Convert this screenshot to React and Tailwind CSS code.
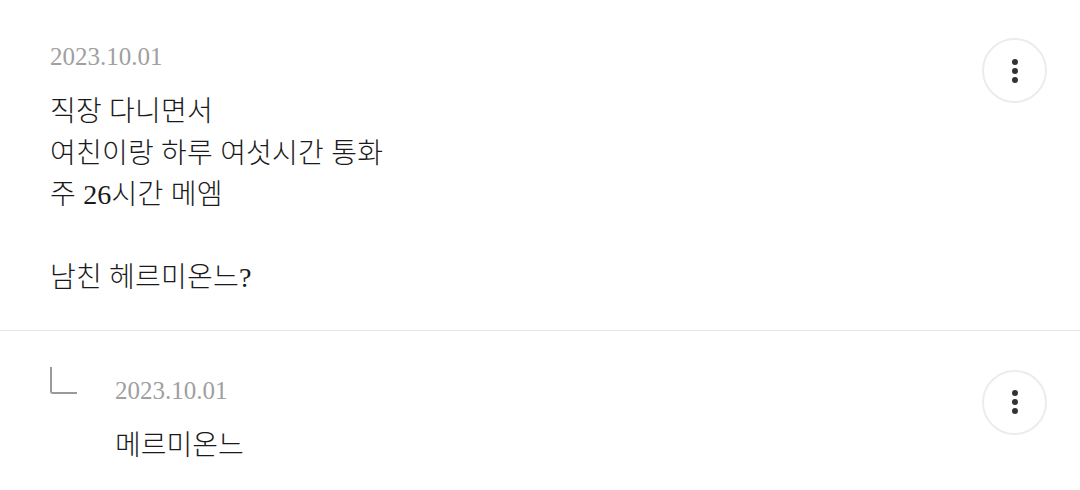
import React from "react";

const MoreButton = () => (
  <button className="w-[65px] h-[65px] rounded-full border-2 border-[#ececec] bg-white flex flex-col items-center justify-center gap-[3px] shrink-0">
    <span className="w-[6px] h-[6px] rounded-full bg-[#333]" />
    <span className="w-[6px] h-[6px] rounded-full bg-[#333]" />
    <span className="w-[6px] h-[6px] rounded-full bg-[#333]" />
  </button>
);

const App = () => {
  const font = { fontFamily: '"Liberation Serif", "Noto Sans CJK KR", serif' };

  return (
    <div className="w-[1080px] h-[490px] bg-white overflow-hidden" style={font}>
      {/* main comment */}
      <div className="flex justify-between items-start pl-[50px] pr-[33px] pt-[37px] pb-[31px] border-b border-[#e6e6e6]">
        <div>
          <div className="text-[25px] leading-[40px] text-[#a0a0a0]">2023.10.01</div>
          <div className="mt-[14px] text-[28px] font-light tracking-[0.2px] leading-[41.6px] text-[#1a1a1a] whitespace-pre-line">
            {"직장 다니면서\n여친이랑 하루 여섯시간 통화\n주 26시간 메엠\n\n남친 헤르미온느?"}
          </div>
        </div>
        <div className="mt-[1px]">
          <MoreButton />
        </div>
      </div>

      {/* reply */}
      <div className="flex justify-between items-start pl-[50px] pr-[33px] pt-[40px]">
        <div className="flex">
          <div className="w-[27px] h-[27px] border-l-2 border-b-2 border-[#9a9a9a] rounded-bl-[3px] mt-[-4px]" />
          <div className="ml-[38px]">
            <div className="text-[25px] leading-[40px] text-[#a0a0a0]">2023.10.01</div>
            <div className="mt-[14px] text-[28px] font-light leading-[41.6px] text-[#1a1a1a]">메르미온느</div>
          </div>
        </div>
        <div className="mt-[-1px]">
          <MoreButton />
        </div>
      </div>
    </div>
  );
};

export default App;
